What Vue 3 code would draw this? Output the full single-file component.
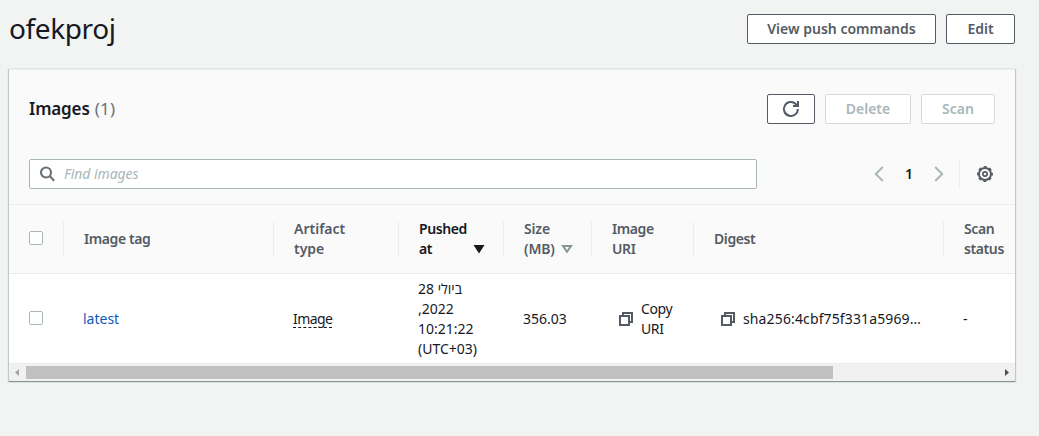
<script setup>
const columns = [
  { key: 'tag', lines: ['Image tag'] },
  { key: 'artifact', lines: ['Artifact', 'type'] },
  { key: 'pushed', lines: ['Pushed', 'at'], sort: 'active' },
  { key: 'size', lines: ['Size', '(MB)'], sort: 'idle' },
  { key: 'uri', lines: ['Image', 'URI'] },
  { key: 'digest', lines: ['Digest'] },
  { key: 'scan', lines: ['Scan', 'status'] },
]
const pushedAt = ['28 ביולי', ',2022', '10:21:22', '(UTC+03)']
</script>

<template>
  <main class="page">
    <header class="page-head">
      <h1 class="title"><span>ofekproj</span></h1>
      <button class="btn push"><span>View push commands</span></button>
      <button class="btn edit"><span>Edit</span></button>
    </header>

    <section class="panel">
      <div class="panel-head">
        <h2><span class="h-name">Images</span><span class="count">(1)</span></h2>
        <button class="btn refresh" aria-label="Refresh">
          <svg width="18" height="18" viewBox="0 0 18 18" fill="none" stroke="#545b64" stroke-width="2">
            <path d="M15.9 9a7 7 0 1 1-2.2-5.1L15.6 5.6" />
            <path d="M11 6h5V1" />
          </svg>
        </button>
        <button class="btn off delete"><span>Delete</span></button>
        <button class="btn off scan-btn"><span>Scan</span></button>
      </div>

      <div class="tools">
        <div class="search">
          <svg width="16" height="16" viewBox="0 0 16 16" fill="none" stroke="#687078" stroke-width="2.1">
            <circle cx="6" cy="6.5" r="5" />
            <path d="M9.600 10.100l4.600 4.600" />
          </svg>
          <span class="placeholder">Find images</span>
        </div>
        <div class="pager">
          <svg width="10" height="16" viewBox="0 0 10 16" fill="none" stroke="#aab7b8" stroke-width="2">
            <path d="M8.8 1L1.8 8l7 7" />
          </svg>
          <b>1</b>
          <svg width="10" height="16" viewBox="0 0 10 16" fill="none" stroke="#aab7b8" stroke-width="2">
            <path d="M1.2 1l7 7-7 7" />
          </svg>
        </div>
        <div class="settings">
          <svg width="16" height="16" viewBox="0 0 16 16" fill="none" stroke="#545b64">
            <circle cx="8" cy="8" r="6" stroke-width="2" />
            <circle cx="8" cy="8" r="7.1" stroke-width="1.7" stroke-dasharray="3 2.576" stroke-dashoffset="1.5" />
            <circle cx="8" cy="8" r="2.1" stroke-width="1.7" />
          </svg>
        </div>
      </div>

      <div class="row thead">
        <div class="cell check"><i class="box" /></div>
        <div v-for="c in columns" :key="c.key" class="cell" :class="['h-' + c.key, { active: c.sort === 'active' }]">
          <div>
            <div v-for="l in c.lines" :key="l"><span>{{ l }}</span></div>
          </div>
          <svg v-if="c.sort" class="sort" width="12" height="10" viewBox="0 0 12 10">
            <path v-if="c.sort === 'active'" d="M.5 1h11L6 9.500z" fill="#16191f" />
            <path v-else d="M2 2h8L6 7.800z" fill="none" stroke="#879596" stroke-width="2" />
          </svg>
        </div>
      </div>

      <div class="row body">
        <div class="cell check"><i class="box" /></div>
        <div class="cell b-tag"><span class="link">latest</span></div>
        <div class="cell b-artifact"><span class="dashed">Image</span></div>
        <div class="cell b-pushed">
          <div>
            <div v-for="l in pushedAt" :key="l"><span>{{ l }}</span></div>
          </div>
        </div>
        <div class="cell b-size"><span>356.03</span></div>
        <div class="cell b-uri">
          <svg class="copy" width="14" height="14" viewBox="0 0 14 14" fill="none" stroke="#545b64" stroke-width="2">
            <path d="M1 4h9v9H1z" /><path d="M4 4V1h9v9h-3" />
          </svg>
          <div><div>Copy</div><div>URI</div></div>
        </div>
        <div class="cell b-digest">
          <svg class="copy" width="14" height="14" viewBox="0 0 14 14" fill="none" stroke="#545b64" stroke-width="2">
            <path d="M1 4h9v9H1z" /><path d="M4 4V1h9v9h-3" />
          </svg>
          <span>sha256:4cbf75f331a5969…</span>
        </div>
        <div class="cell b-scan"><span>-</span></div>
      </div>

      <div class="scrollbar">
        <svg width="17" height="17" viewBox="0 0 17 17"><path d="M10 5v7L6 8.500z" fill="#a3a3a3" /></svg>
        <div class="track"><div class="thumb" /></div>
        <svg width="17" height="17" viewBox="0 0 17 17"><path d="M7 5v7l4-3.500z" fill="#505050" /></svg>
      </div>
    </section>
  </main>
</template>

<style>
body { background: #f2f3f3; }
</style>

<style scoped>
* { box-sizing: border-box; }
.page {
  height: 436px;
  background: #f2f3f3;
  font: 14px/20px "Noto Sans", "Open Sans", "DejaVu Sans", sans-serif;
  color: #16191f;
  overflow: hidden;
  white-space: nowrap;
}
.page-head { display: flex; gap: 10px; height: 69px; padding: 14px 24px 0 9px; }
.title { margin: -4px auto 0 0; font-size: 28px; line-height: 36px; font-weight: 400; letter-spacing: -0.4px; }
.btn {
  height: 30px;
  padding: 0;
  border: 1px solid #545b64;
  border-radius: 2px;
  background: #fff;
  color: #545b64;
  font: 600 14px/20px "Noto Sans", "Open Sans", sans-serif;
  display: flex;
  align-items: center;
  justify-content: center;
}
.push { width: 189px; }
.edit { width: 69px; }
.refresh { width: 48px; }
.delete { width: 86px; }
.scan-btn { width: 74px; }
.off { border-color: #d5dbdb; color: #aab7b8; }

.panel {
  width: 1006px;
  margin-left: 9px;
  background: #fafafa;
  border-top: 1px solid #eaeded;
  border-bottom: 1px solid #879596;
  box-shadow: 0 1px 0 0 #dde1e2, 1px 0 1px 0 rgba(0, 28, 36, 0.2), -1px 0 1px 0 rgba(0, 28, 36, 0.2);
}
.panel-head { display: flex; gap: 10px; padding: 24px 20px 0; height: 89px; }
h2 { display: flex; align-items: baseline; gap: 5px; margin: 0 auto 0 0; font-size: 17px; line-height: 30px; font-weight: 600; }
.h-name { letter-spacing: -0.15px; }
.count { font-weight: 400; color: #687078; letter-spacing: 0.3px; }
.tools { display: flex; height: 46px; padding: 0 20px; border-bottom: 1px solid #eaeded; }
.search {
  display: flex;
  align-items: center;
  gap: 8px;
  width: 728px;
  height: 30px;
  padding-left: 10px;
  background: #fff;
  border: 1px solid #aab7b8;
  border-radius: 2px;
}
.placeholder { font-style: italic; color: #aab7b8; letter-spacing: -0.05px; }
.pager { display: flex; align-items: center; gap: 21px; height: 30px; margin-left: 117px; }
.pager b { width: 8px; font-size: 14px; font-weight: 600; }
.settings {
  display: flex;
  align-items: center;
  height: 30px;
  margin-left: auto;
  padding-left: 17px;
  border-left: 1px solid #eaeded;
}
.settings svg { margin-right: 2px; }

.row { display: grid; grid-template-columns: 55px 210px 125px 105px 88px 102px 250px 71px; }
.cell { display: flex; align-items: center; min-width: 0; padding-left: 20px; }
.thead { height: 69px; border-bottom: 1px solid #eaeded; font-weight: 600; color: #545b64; letter-spacing: -0.4px; }
.thead .cell { border-right: 1px solid #eaeded; height: 34px; align-self: center; }
.thead .cell:last-child { border-right: 0; }
.thead .active { color: #16191f; }
.thead .h-artifact { letter-spacing: 0; }
.thead .h-size { letter-spacing: -0.15px; }
.box { width: 14px; height: 14px; border: 1px solid #aab7b8; border-radius: 2px; background: #fff; margin-top: -2px; }
.sort { margin: 20px 18px 0 auto; }

.body { height: 90px; padding-top: 1px; background: #fff; border-bottom: 1px solid #eaeded; }
.body .cell { padding-left: 19px; }
.body .check { padding-left: 20px; }
.link { color: #0a5bb8; }
.dashed { line-height: 17px; border-bottom: 1px dashed #16191f; letter-spacing: -0.6px; }
.copy { flex: none; margin: 0 8px; }
.b-uri { letter-spacing: -0.4px; }
.b-digest { letter-spacing: 0.13px; }

.scrollbar { display: flex; height: 17px; background: #f1f1f1; align-items: center; }
.track { flex: 1; height: 13px; }
.thumb { width: 807px; height: 13px; background: #c1c1c1; }
</style>
